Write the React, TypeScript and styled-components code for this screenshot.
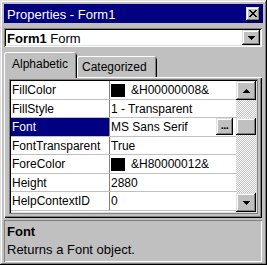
import React from "react";
import styled, { createGlobalStyle } from "styled-components";

const Global = createGlobalStyle`
  html, body { margin: 0; padding: 0; background: #c0c0c0; }
  body { font-family: "Liberation Sans", Arial, sans-serif; }
  * { box-sizing: border-box; }
`;

const raisedShadow =
  "inset -1px -1px #000, inset 1px 1px #dfdfdf, inset -2px -2px #808080, inset 2px 2px #fff";

const Window = styled.div`
  width: 267px;
  height: 265px;
  background: #c0c0c0;
  padding: 4px 4px 3px 4px;
  display: flex;
  flex-direction: column;
  box-shadow: ${raisedShadow};
`;

const TitleBar = styled.div`
  height: 19px;
  flex: none;
  background: #000080;
  display: flex;
  align-items: center;
  padding: 0 3px 0 3px;
`;

const TitleText = styled.span`
  color: #fff;
  font-size: 13px;
  line-height: 15px;
  padding-top: 2px;
  flex: 1;
  white-space: nowrap;
`;

const RaisedButton = styled.div<{ $w: number; $h: number }>`
  width: ${(p) => p.$w}px;
  height: ${(p) => p.$h}px;
  flex: none;
  background: #c0c0c0;
  box-shadow: ${raisedShadow};
  display: flex;
  align-items: center;
  justify-content: center;
`;

const Combo = styled.div`
  margin-top: 5px;
  width: 258px;
  height: 19px;
  flex: none;
  background: #fff;
  box-shadow: inset 1px 1px #808080, inset -1px -1px #fff, inset 2px 2px #000,
    inset -2px -2px #dfdfdf;
  padding: 2px 2px 2px 3px;
  display: flex;
  align-items: center;
`;

const ComboText = styled.span`
  flex: 1;
  font-size: 13px;
  line-height: 15px;
  padding-top: 2px;
  color: #000;
  white-space: nowrap;
  b {
    font-weight: bold;
  }
`;

const TabStrip = styled.div`
  margin-top: 5px;
  height: 25px;
  flex: none;
  display: flex;
  align-items: flex-end;
`;

const Tab = styled.div<{ $active?: boolean; $w: number }>`
  width: ${(p) => p.$w}px;
  height: ${(p) => (p.$active ? 26 : 21)}px;
  margin-bottom: ${(p) => (p.$active ? -1 : 0)}px;
  position: relative;
  z-index: ${(p) => (p.$active ? 2 : 1)};
  background: #c0c0c0;
  border-radius: 3px 3px 0 0;
  box-shadow: inset 1px 0 #fff, inset 0 1px #fff, inset -1px 0 #000,
    inset -2px 0 #808080;
  font-size: 12px;
  line-height: 14px;
  color: #000;
  padding: ${(p) => (p.$active ? "5px 0 0 8px" : "4px 0 0 5px")};
  white-space: nowrap;
`;

const TabPanel = styled.div`
  width: 258px;
  height: 141px;
  flex: none;
  background: #c0c0c0;
  box-shadow: inset 1px 1px #fff, inset -1px -1px #000, inset -2px -2px #808080;
  padding: 2px 0 0 5px;
`;

const Grid = styled.div`
  width: 249px;
  height: 135px;
  background: #fff;
  box-shadow: inset 1px 1px #808080, inset -1px -1px #808080, inset 2px 2px #000,
    inset -2px -2px #dfdfdf;
  padding: 2px;
  display: flex;
`;

const Rows = styled.div`
  flex: 1;
  display: flex;
  flex-direction: column;
`;

const Row = styled.div`
  height: 18.5px;
  flex: none;
  display: flex;
  border-bottom: 1px solid #c0c0c0;
`;

const NameCell = styled.div<{ $selected?: boolean }>`
  width: 99px;
  flex: none;
  border-right: 1px solid #808080;
  background: ${(p) => (p.$selected ? "#000080" : "#fff")};
  color: ${(p) => (p.$selected ? "#fff" : "#000")};
  font-size: 12px;
  line-height: 14px;
  padding: 2px 0 0 1px;
  white-space: nowrap;
  overflow: hidden;
`;

const ValueCell = styled.div`
  flex: 1;
  display: flex;
  align-items: flex-start;
  font-size: 12px;
  line-height: 14px;
  color: #000;
  padding: 2px 0 0 1px;
  white-space: nowrap;
  overflow: hidden;
`;

const Swatch = styled.span`
  width: 14px;
  height: 13px;
  flex: none;
  background: #000;
  margin: 1px 6px 0 0;
`;

const ValueText = styled.span`
  flex: 1;
`;

const EllipsisButton = styled.div`
  width: 17px;
  height: 17px;
  flex: none;
  margin: -2px 3px 0 0;
  background: #c0c0c0;
  box-shadow: ${raisedShadow};
  font-size: 11px;
  font-weight: bold;
  line-height: 11px;
  letter-spacing: -0.5px;
  display: flex;
  align-items: flex-end;
  justify-content: center;
  padding-bottom: 4px;
`;

const ScrollBar = styled.div`
  width: 20px;
  flex: none;
  display: flex;
  flex-direction: column;
`;

const Track = styled.div`
  flex: 1;
  background: repeating-conic-gradient(#c0c0c0 0 25%, #fff 0 50%) 0 0 / 2px 2px;
  display: flex;
  flex-direction: column;
`;

const Thumb = styled.div`
  height: 17px;
  margin-top: 18px;
  flex: none;
  background: #c0c0c0;
  box-shadow: ${raisedShadow};
`;

const Description = styled.div`
  margin-top: 2px;
  width: 258px;
  flex: 1;
  box-shadow: inset 1px 1px #808080, inset -1px -1px #fff;
  padding: 4px 0 0 3px;
  font-size: 13px;
  line-height: 15px;
  color: #000;
`;

const DescTitle = styled.div`
  font-weight: bold;
`;

const DescBody = styled.div`
  margin-top: 3px;
`;

const PixelIcon = ({ rows }: { rows: string[] }) => (
  <svg
    width={rows[0].length}
    height={rows.length}
    viewBox={`0 0 ${rows[0].length} ${rows.length}`}
    shapeRendering="crispEdges"
  >
    {rows.flatMap((r, y) =>
      r
        .split("")
        .map((c, x) =>
          c === "X" ? <rect key={`${x}-${y}`} x={x} y={y} width={1} height={1} fill="#000" /> : null
        )
    )}
  </svg>
);

const closeGlyph = [
  "XX....XX",
  ".XX..XX.",
  "..XXXX..",
  "...XX...",
  "..XXXX..",
  ".XX..XX.",
  "XX....XX",
];
const downGlyph = ["XXXXXXX", ".XXXXX.", "..XXX..", "...X..."];
const upGlyph = ["...X...", "..XXX..", ".XXXXX.", "XXXXXXX"];

type Prop = {
  name: string;
  value: string;
  swatch?: boolean;
  selected?: boolean;
};

const props: Prop[] = [
  { name: "FillColor", value: "&H00000008&", swatch: true },
  { name: "FillStyle", value: "1 - Transparent" },
  { name: "Font", value: "MS Sans Serif", selected: true },
  { name: "FontTransparent", value: "True" },
  { name: "ForeColor", value: "&H80000012&", swatch: true },
  { name: "Height", value: "2880" },
  { name: "HelpContextID", value: "0" },
];

export default function App() {
  return (
    <>
      <Global />
      <Window>
        <TitleBar>
          <TitleText>Properties - Form1</TitleText>
          <RaisedButton $w={14} $h={14}>
            <PixelIcon rows={closeGlyph} />
          </RaisedButton>
        </TitleBar>
        <Combo>
          <ComboText>
            <b>Form1</b> Form
          </ComboText>
          <RaisedButton $w={18} $h={15}>
            <PixelIcon rows={downGlyph} />
          </RaisedButton>
        </Combo>
        <TabStrip>
          <Tab $active $w={73}>Alphabetic</Tab>
          <Tab $w={80}>Categorized</Tab>
        </TabStrip>
        <TabPanel>
          <Grid>
            <Rows>
              {props.map((p) => (
                <Row key={p.name}>
                  <NameCell $selected={p.selected}>{p.name}</NameCell>
                  <ValueCell>
                    {p.swatch && <Swatch />}
                    <ValueText>{p.value}</ValueText>
                    {p.selected && <EllipsisButton>...</EllipsisButton>}
                  </ValueCell>
                </Row>
              ))}
            </Rows>
            <ScrollBar>
              <RaisedButton $w={20} $h={19}>
                <PixelIcon rows={upGlyph} />
              </RaisedButton>
              <Track>
                <Thumb />
              </Track>
              <RaisedButton $w={20} $h={19}>
                <PixelIcon rows={downGlyph} />
              </RaisedButton>
            </ScrollBar>
          </Grid>
        </TabPanel>
        <Description>
          <DescTitle>Font</DescTitle>
          <DescBody>Returns a Font object.</DescBody>
        </Description>
      </Window>
    </>
  );
}
